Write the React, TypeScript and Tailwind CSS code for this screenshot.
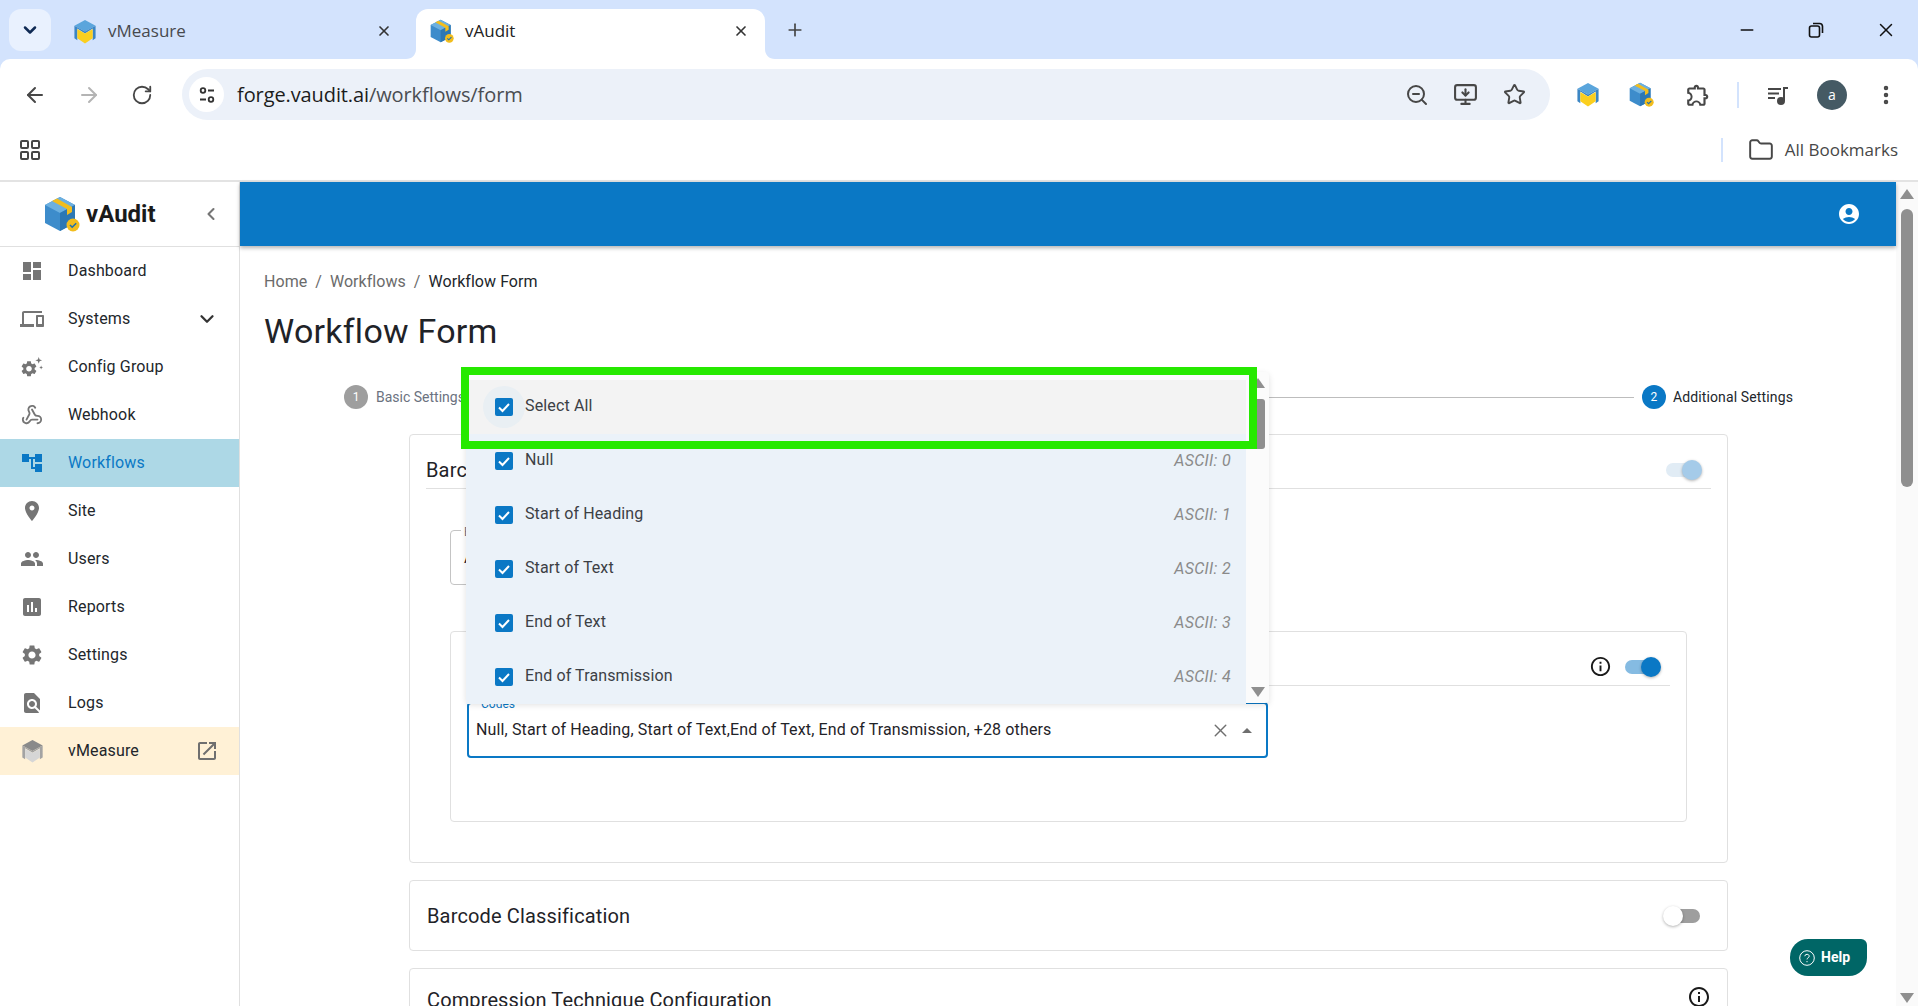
import {
  ArrowLeft,
  ArrowRight,
  ChevronDown,
  ChevronLeft,
  EllipsisVertical,
  Folder,
  LayoutGrid,
  Minus,
  MonitorDown,
  Plus,
  RotateCw,
  Star,
  Webhook,
  X,
  ZoomOut,
} from 'lucide-react';
import type { ReactNode } from 'react';

const roboto = "font-['Roboto',sans-serif]";

const PATHS = {
  dashboard: 'M3 13h8V3H3v10zm0 8h8v-6H3v6zm10 0h8V11h-8v10zm0-18v6h8V3h-8z',
  devices:
    'M4 6h18V4H4c-1.1 0-2 .9-2 2v11H0v3h14v-3H4V6zm19 2h-6c-.55 0-1 .45-1 1v10c0 .55.45 1 1 1h6c.55 0 1-.45 1-1V9c0-.55-.45-1-1-1zm-1 9h-4v-7h4v7z',
  settings:
    'M19.14 12.94c.04-.3.06-.61.06-.94 0-.32-.02-.64-.07-.94l2.03-1.58c.18-.14.23-.41.12-.61l-1.92-3.32c-.12-.22-.37-.29-.59-.22l-2.39.96c-.5-.38-1.03-.7-1.62-.94l-.36-2.54c-.04-.24-.24-.41-.48-.41h-3.84c-.24 0-.43.17-.47.41l-.36 2.54c-.59.24-1.13.57-1.62.94l-2.39-.96c-.22-.08-.47 0-.59.22L2.74 8.87c-.12.21-.08.47.12.61l2.03 1.58c-.05.3-.09.63-.09.94s.02.64.07.94l-2.03 1.58c-.18.14-.23.41-.12.61l1.92 3.32c.12.22.37.29.59.22l2.39-.96c.5.38 1.03.7 1.62.94l.36 2.54c.05.24.24.41.48.41h3.84c.24 0 .44-.17.47-.41l.36-2.54c.59-.24 1.13-.56 1.62-.94l2.39.96c.22.08.47 0 .59-.22l1.92-3.32c.12-.22.07-.47-.12-.61l-2.01-1.58zM12 15.6c-1.98 0-3.6-1.62-3.6-3.6s1.62-3.6 3.6-3.6 3.6 1.62 3.6 3.6-1.62 3.6-3.6 3.6z',
  place:
    'M12 2C8.13 2 5 5.13 5 9c0 5.25 7 13 7 13s7-7.75 7-13c0-3.87-3.13-7-7-7zm0 9.5c-1.38 0-2.5-1.12-2.5-2.5s1.12-2.5 2.5-2.5 2.5 1.12 2.5 2.5-1.12 2.5-2.5 2.5z',
  people:
    'M16 11c1.66 0 2.99-1.34 2.99-3S17.66 5 16 5c-1.66 0-3 1.34-3 3s1.34 3 3 3zm-8 0c1.66 0 2.99-1.34 2.99-3S9.66 5 8 5C6.34 5 5 6.34 5 8s1.34 3 3 3zm0 2c-2.33 0-7 1.17-7 3.5V19h14v-2.5c0-2.33-4.67-3.5-7-3.5zm8 0c-.29 0-.62.02-.97.05 1.16.84 1.97 1.97 1.97 3.45V19h6v-2.5c0-2.33-4.67-3.5-7-3.5z',
  assessment:
    'M19 3H5c-1.1 0-2 .9-2 2v14c0 1.1.9 2 2 2h14c1.1 0 2-.9 2-2V5c0-1.1-.9-2-2-2zM9 17H7v-7h2v7zm4 0h-2V7h2v10zm4 0h-2v-4h2v4z',
  findInPage:
    'M20 19.59V8l-6-6H6c-1.1 0-1.99.9-1.99 2L4 20c0 1.1.89 2 1.99 2H18c.45 0 .85-.15 1.19-.4l-4.43-4.43c-.8.52-1.74.83-2.76.83-2.76 0-5-2.24-5-5s2.24-5 5-5 5 2.24 5 5c0 1.02-.31 1.96-.83 2.75L20 19.59zM9 13c0 1.66 1.34 3 3 3s3-1.34 3-3-1.34-3-3-3-3 1.34-3 3z',
  openNew:
    'M19 19H5V5h7V3H5c-1.11 0-2 .9-2 2v14c0 1.1.89 2 2 2h14c1.1 0 2-.9 2-2v-7h-2v7zM14 3v2h3.59l-9.83 9.83 1.41 1.41L19 6.41V10h2V3h-7z',
  account:
    'M12 2C6.48 2 2 6.48 2 12s4.48 10 10 10 10-4.48 10-10S17.52 2 12 2zm0 4c1.93 0 3.5 1.57 3.5 3.5S13.93 13 12 13s-3.5-1.57-3.5-3.5S10.07 6 12 6zm0 14c-2.03 0-4.43-.82-6.14-2.88C7.55 15.8 9.68 15 12 15s4.45.8 6.14 2.12C16.43 19.18 14.03 20 12 20z',
  info: 'M11 7h2v2h-2zm0 4h2v6h-2zm1-9C6.48 2 2 6.48 2 12s4.48 10 10 10 10-4.48 10-10S17.52 2 12 2zm0 18c-4.41 0-8-3.59-8-8s3.59-8 8-8 8 3.59 8 8-3.59 8-8 8z',
  tree: 'M22 11V3h-7v3H9V3H2v8h7V8h2v10h4v3h7v-8h-7v3h-2V8h2v3z',
  extension:
    'M10.5 4.5c.28 0 .5.22.5.5v2h6v6h2c.28 0 .5.22.5.5s-.22.5-.5.5h-2v6h-2.12c-.68-1.75-2.39-3-4.38-3s-3.7 1.25-4.38 3H4v-2.12c1.75-.68 3-2.39 3-4.38 0-1.99-1.24-3.7-2.99-4.38L4 7h6V5c0-.28.22-.5.5-.5m0-2C9.12 2.5 8 3.62 8 5H4c-1.1 0-1.99.9-1.99 2v3.8h.49c1.49 0 2.7 1.21 2.7 2.7s-1.21 2.7-2.7 2.7H2V20c0 1.1.9 2 2 2h3.8v-.5c0-1.49 1.21-2.7 2.7-2.7s2.7 1.21 2.7 2.7v.5H17c1.1 0 2-.9 2-2v-4c1.38 0 2.5-1.12 2.5-2.5S20.38 11 19 11V7c0-1.1-.9-2-2-2h-4c0-1.38-1.12-2.5-2.5-2.5z',
};

function Mi({ d, className }: { d: string; className?: string }) {
  return (
    <svg viewBox="0 0 24 24" fill="currentColor" className={className}>
      <path d={d} />
    </svg>
  );
}

function VAuditLogo({ className }: { className?: string }) {
  return (
    <svg viewBox="0 0 36 36" className={className}>
      <path d="M16 1 31 9v18L16 35 1 27V9z" fill="#3d8ccb" />
      <path d="M16 1 31 9 16 17 1 9z" fill="#6cb0e0" />
      <path d="M16 17 31 9v18L16 35z" fill="#2c77b4" />
      <path d="M8 5 23 13v6l5-3v-5L13 2.5z" fill="#f2bd1d" />
      <circle cx="29" cy="29" r="6.5" fill="#f2bd1d" />
      <path d="m26 29 2.2 2.2 4-4" stroke="#1c6fb0" strokeWidth="1.6" fill="none" />
    </svg>
  );
}

function VMeasureLogo({ className, gray }: { className?: string; gray?: boolean }) {
  return (
    <svg viewBox="0 0 24 26" className={className}>
      <path d="M12 1 23 7 12 13 1 7z" fill={gray ? '#8a8a8a' : '#5aa5dc'} />
      <path d="M1 7v13l3 2V10l8 5 8-5v12l3-2V7l-11 6z" fill={gray ? '#a3a3a3' : '#3c86c4'} />
      <path d="M4 10.5 12 15l8-4.5V20l-8 5.5L4 20z" fill={gray ? '#d6d6d6' : '#fbcf1f'} />
    </svg>
  );
}

function ConfigIcon() {
  return (
    <svg viewBox="0 0 24 24" fill="currentColor" className="size-[23px]">
      <g transform="translate(-1.5 3.5) scale(.82)">
        <path d={PATHS.settings} />
      </g>
      <path d="m18.5 1 .9 2.6 2.6.9-2.6.9-.9 2.6-.9-2.6-2.6-.9 2.6-.9zM21 10l.6 1.4 1.4.6-1.4.6L21 14l-.6-1.4-1.4-.6 1.4-.6z" />
    </svg>
  );
}

function MediaIcon() {
  return (
    <svg viewBox="0 0 24 24" className="size-[24px]" fill="none" stroke="currentColor" strokeWidth="2">
      <path d="M2 6h13M2 10.5h11M2 15h7" />
      <circle cx="15" cy="18" r="3" fill="currentColor" />
      <path d="M18 18V5h4" />
    </svg>
  );
}

function Check({ halo }: { halo?: boolean }) {
  return (
    <span className="relative flex size-[18px] shrink-0 items-center justify-center rounded-[2px] bg-[#0a78c5]">
      {halo && <span className="absolute -inset-3 -z-10 rounded-full bg-[#e9eff3]" />}
      <svg viewBox="0 0 18 18" className="size-[18px]" fill="none" stroke="white" strokeWidth="2">
        <path d="m4 9.5 3.5 3.5L14 6" />
      </svg>
    </span>
  );
}

function Toggle({ on, track, thumb }: { on?: boolean; track: string; thumb: string }) {
  return (
    <span className={`relative block h-[14px] w-[34px] rounded-full ${track}`}>
      <span
        className={`absolute top-[-3px] size-[20px] rounded-full shadow-[0_1px_3px_rgba(0,0,0,0.3)] ${thumb} ${
          on ? 'right-[-2px]' : 'left-[-3px]'
        }`}
      />
    </span>
  );
}

function Tab({ title, active, icon }: { title: string; active?: boolean; icon: ReactNode }) {
  return (
    <div
      className={`relative flex h-[50px] w-[349px] items-center rounded-t-[12px] pb-[6px] pl-[14px] pr-[16px] ${
        active ? 'bg-white' : ''
      }`}
    >
      {active && (
        <>
          <svg viewBox="0 0 10 10" className="absolute bottom-0 left-[-10px] size-[10px]">
            <path d="M10 0v10H0c6 0 10-4 10-10z" fill="white" />
          </svg>
          <svg viewBox="0 0 10 10" className="absolute bottom-0 right-[-10px] size-[10px]">
            <path d="M0 0v10h10C4 10 0 6 0 0z" fill="white" />
          </svg>
        </>
      )}
      <span className="flex w-[24px] justify-center">{icon}</span>
      <span className={`ml-[11px] flex-1 text-[17px] ${active ? 'text-[#222]' : 'text-[#47494d]'}`}>{title}</span>
      <X className="size-[16px] text-[#333]" strokeWidth={2.5} />
    </div>
  );
}

function Browser() {
  return (
    <div className="font-['Open_Sans',sans-serif]">
      <div className="flex h-[59px] items-start bg-[#d3e3fd] pt-[9px]">
        <div className="ml-[9px] flex size-[42px] items-center justify-center rounded-[12px] bg-[#e9f1fe]">
          <ChevronDown className="size-[20px] text-[#0f2a54]" strokeWidth={3} />
        </div>
        <div className="ml-[8px] w-[357px]">
          <Tab title="vMeasure" icon={<VMeasureLogo className="h-[25px] w-[24px]" />} />
        </div>
        <Tab title="vAudit" active icon={<VAuditLogo className="size-[24px]" />} />
        <Plus className="ml-[20px] mt-[11px] size-[20px] text-[#444]" strokeWidth={2} />
        <div className="ml-auto mr-[21px] flex h-[42px] items-center gap-[49px] text-[#111]">
          <Minus className="size-[20px]" strokeWidth={1.6} />
          <svg viewBox="0 0 20 20" className="size-[20px]" fill="none" stroke="currentColor" strokeWidth="1.6">
            <rect x="3.5" y="6" width="10" height="11" rx="2" />
            <path d="M7 3.5h6.5a3 3 0 0 1 3 3V13" />
          </svg>
          <X className="size-[22px]" strokeWidth={1.6} />
        </div>
      </div>

      <div className="flex h-[61px] items-center rounded-t-[10px] bg-white pt-[10px] text-[#474747]">
        <ArrowLeft className="ml-[23px] size-[24px]" strokeWidth={2} />
        <ArrowRight className="ml-[30px] size-[24px] text-[#b4b4b4]" strokeWidth={2} />
        <RotateCw className="ml-[30px] size-[22px]" strokeWidth={2} />
        <div className="ml-[29px] flex h-[51px] w-[1368px] items-center rounded-full bg-[#ecf1f9] pl-[7px] pr-[24px]">
          <span className="flex size-[35px] items-center justify-center rounded-full bg-white">
            <svg viewBox="0 0 20 20" className="size-[20px]" fill="none" stroke="#333" strokeWidth="1.8">
              <circle cx="6" cy="5.5" r="2.3" />
              <path d="M11 5.5h6M3 14.5h6" />
              <circle cx="14" cy="14.5" r="2.3" />
            </svg>
          </span>
          <span className="ml-[13px] flex-1 text-[20px] tracking-[-0.1px] text-[#4a4d52]">
            <span className="text-[#1c1c1c]">forge.vaudit.ai</span>/workflows/form
          </span>
          <ZoomOut className="size-[24px]" strokeWidth={2} />
          <MonitorDown className="ml-[24px] size-[25px]" strokeWidth={2} />
          <Star className="ml-[25px] size-[23px]" strokeWidth={2} />
        </div>
        <VMeasureLogo className="ml-[26px] h-[25px] w-[24px]" />
        <VAuditLogo className="ml-[29px] size-[25px]" />
        <Mi d={PATHS.extension} className="ml-[31px] size-[26px]" />
        <span className="ml-[26px] h-[26px] w-[2px] bg-[#d3e3fd]" />
        <span className="ml-[27px]">
          <MediaIcon />
        </span>
        <span className="ml-[27px] flex size-[30px] items-center justify-center rounded-full bg-[#455a64] text-[14px] text-white">
          a
        </span>
        <EllipsisVertical className="ml-[27px] size-[24px]" strokeWidth={2.5} />
      </div>

      <div className="flex h-[62px] items-center border-b-2 border-[#e3e3e3] bg-white text-[#474747]">
        <LayoutGrid className="ml-[18px] size-[24px]" strokeWidth={2} />
        <span className="ml-auto h-[24px] w-[2px] bg-[#d3e3fd]" />
        <Folder className="ml-[25px] size-[26px]" strokeWidth={1.8} />
        <span className="ml-[11px] mr-[20px] text-[17px]">All Bookmarks</span>
      </div>
    </div>
  );
}

const NAV = [
  { label: 'Dashboard', icon: <Mi d={PATHS.dashboard} className="size-[24px]" /> },
  { label: 'Systems', icon: <Mi d={PATHS.devices} className="size-[24px]" />, trailing: 'chevron' },
  { label: 'Config Group', icon: <ConfigIcon /> },
  { label: 'Webhook', icon: <Webhook className="size-[22px]" strokeWidth={2} /> },
  { label: 'Workflows', icon: <Mi d={PATHS.tree} className="size-[24px]" />, active: true },
  { label: 'Site', icon: <Mi d={PATHS.place} className="size-[24px]" /> },
  { label: 'Users', icon: <Mi d={PATHS.people} className="size-[24px]" /> },
  { label: 'Reports', icon: <Mi d={PATHS.assessment} className="size-[24px]" /> },
  { label: 'Settings', icon: <Mi d={PATHS.settings} className="size-[24px]" /> },
  { label: 'Logs', icon: <Mi d={PATHS.findInPage} className="size-[24px]" /> },
  { label: 'vMeasure', icon: <VMeasureLogo gray className="h-[24px] w-[23px]" />, trailing: 'open', highlight: true },
];

function Sidebar() {
  return (
    <aside className="w-[240px] shrink-0 border-r border-[#e0e0e0] bg-white">
      <div className="flex h-[65px] items-center border-b border-[#e0e0e0] pl-[44px] pr-[18px]">
        <VAuditLogo className="size-[36px]" />
        <span className="ml-[6px] text-[24px] font-bold text-[#1a1a1a]">vAudit</span>
        <ChevronLeft className="ml-auto size-[20px] text-[#757575]" strokeWidth={2.5} />
      </div>
      <nav>
        {NAV.map((item) => (
          <div
            key={item.label}
            className={`flex h-[48px] items-center text-[16px] ${
              item.active ? 'bg-[#add8e6] text-[#0a78c5]' : 'text-[#22262b]'
            } ${item.highlight ? 'bg-[#fff1d6]' : ''}`}
          >
            <span className={`flex w-[64px] justify-center ${item.active ? 'text-[#0a78c5]' : 'text-[#757575]'}`}>
              {item.icon}
            </span>
            <span className="ml-[4px] flex-1 tracking-[0.15px]">{item.label}</span>
            {item.trailing === 'chevron' && <ChevronDown className="mr-[21px] size-[22px] text-[#333]" strokeWidth={2.5} />}
            {item.trailing === 'open' && <Mi d={PATHS.openNew} className="mr-[20px] size-[24px] text-[#6f6f6f]" />}
          </div>
        ))}
      </nav>
    </aside>
  );
}

function Stepper() {
  return (
    <div className="ml-[80px] mr-[103px] mt-[34px] flex h-[24px] items-center text-[14px]">
      <span className="flex size-[24px] items-center justify-center rounded-full bg-[#9e9e9e] text-[12px] text-white">1</span>
      <span className="ml-[8px] text-[#6b7280]">Basic Settings</span>
      <span className="mx-[8px] h-px flex-1 bg-[#bdbdbd]" />
      <span className="flex size-[24px] items-center justify-center rounded-full bg-[#0a78c5] text-[12px] text-white">2</span>
      <span className="ml-[7px] tracking-[0.13px] text-[#22262b]">Additional Settings</span>
    </div>
  );
}

function Cards() {
  return (
    <div className="ml-[145px] mt-[25px] flex w-[1319px] flex-col gap-[17px]">
      <section className="rounded-[4px] border border-[#e0e0e0] px-[16px]">
        <header className="flex h-[54px] items-center border-b border-[#e0e0e0] pt-[16px]">
          <h2 className="flex-1 text-[20px] tracking-[0.15px] text-[#1f2328]">Barcode Settings</h2>
          <span className="mr-[11px]">
            <Toggle on track="bg-[#e1ecf5]" thumb="bg-[#a5cbe9]" />
          </span>
        </header>
        <div className="relative mx-[24px] mt-[41px] flex h-[55px] w-[800px] items-center rounded-[4px] border border-[#c4c4c4] pl-[13px] text-[16px] text-[#1f2328]">
          <span className="absolute left-[10px] top-[-8px] bg-white px-[3px] text-[12px] text-[#6b7280]">Encoding</span>
          ASCII
        </div>
        <div className="mx-[24px] mb-[40px] mt-[46px] h-[191px] w-[1237px] rounded-[4px] border border-[#e0e0e0] pl-[16px] pr-[16px]">
          <header className="flex h-[54px] items-center justify-end border-b border-[#e0e0e0] pt-[16px]">
            <Mi d={PATHS.info} className="mr-[13px] size-[23px] text-[#1a1a1a]" />
            <span className="mr-[11px]">
              <Toggle on track="bg-[#85bbe2]" thumb="bg-[#0a78c5]" />
            </span>
          </header>
          <div className="relative mt-[16px] flex h-[56px] w-[801px] items-center rounded-[4px] border-2 border-[#0a78c5] pl-[7px] pr-[10px] text-[16px] text-[#1f2328]">
            <span className="absolute left-[8px] top-[-9px] bg-white px-[4px] text-[12px] text-[#0a78c5]">Codes</span>
            <span className="flex-1 whitespace-nowrap tracking-[0.13px]">
              Null, Start of Heading, Start of Text,End of Text, End of Transmission, +28 others
            </span>
            <X className="size-[21px] text-[#6f6f6f]" strokeWidth={1.6} />
            <span className="ml-[11px] mr-[4px] border-x-[5px] border-b-[5px] border-x-transparent border-b-[#6f6f6f]" />
          </div>
        </div>
      </section>

      <section className="flex h-[71px] items-center rounded-[4px] border border-[#e0e0e0] pl-[17px] pr-[16px]">
        <h2 className="flex-1 text-[20px] tracking-[0.15px] text-[#1f2328]">Barcode Classification</h2>
        <span className="mr-[11px]">
          <Toggle track="bg-[#9e9e9e]" thumb="bg-white" />
        </span>
      </section>

      <section className="flex h-[71px] items-start rounded-[4px] border border-[#e0e0e0] pl-[17px] pr-[16px] pt-[16px]">
        <h2 className="flex-1 text-[20px] tracking-[0.12px] text-[#1f2328]">Compression Technique Configuration</h2>
        <Mi d={PATHS.info} className="size-[24px] text-[#1a1a1a]" />
      </section>
    </div>
  );
}

const CODES = [
  { label: 'Null', ascii: 0 },
  { label: 'Start of Heading', ascii: 1 },
  { label: 'Start of Text', ascii: 2 },
  { label: 'End of Text', ascii: 3 },
  { label: 'End of Transmission', ascii: 4 },
];

function CodesMenu() {
  return (
    <div className={`absolute left-[466px] top-[372px] flex h-[331px] w-[803px] rounded-[4px] bg-[#fbfbfb] shadow-[0_2px_6px_rgba(0,0,0,0.12)] ${roboto}`}>
      <div className="mt-[8px] w-[780px]">
        <div className="isolate flex h-[54px] items-center bg-[#f3f3f3] pl-[29px] text-[16px] tracking-[0.15px] text-[#3c4045]">
          <Check halo />
          <span className="mb-[2px] ml-[12px]">Select All</span>
        </div>
        {CODES.map((code) => (
          <div key={code.label} className="flex h-[54px] items-center bg-[#ebf2f9] pl-[29px] pr-[15px] text-[16px] tracking-[0.12px] text-[#3c4045]">
            <Check />
            <span className="mb-[2px] ml-[12px] flex-1">{code.label}</span>
            <span className="text-[16px] italic tracking-[0.3px] text-[#8a8a8a]">ASCII: {code.ascii}</span>
          </div>
        ))}
      </div>
      <div className="flex w-[23px] flex-col items-center">
        <span className="mt-[6px] border-x-[7px] border-b-[10px] border-x-transparent border-b-[#8f8f8f]" />
        <span className="mt-[11px] h-[50px] w-[14px] rounded-[3px] bg-[#8f8f8f]" />
        <span className="mb-[6px] mt-auto border-x-[7px] border-t-[10px] border-x-transparent border-t-[#8f8f8f]" />
      </div>
    </div>
  );
}

function Scrollbar() {
  return (
    <div className="flex w-[22px] shrink-0 flex-col items-center bg-[#fafafa] pt-[7px]">
      <span className="border-x-[7px] border-b-[10px] border-x-transparent border-b-[#8f8f8f]" />
      <span className="mt-[10px] h-[278px] w-[12px] rounded-full bg-[#8f8f8f]" />
      <span className="mb-[3px] mt-auto border-x-[7px] border-t-[10px] border-x-transparent border-t-[#8f8f8f]" />
    </div>
  );
}

export default function App() {
  return (
    <div className="relative flex h-screen w-full flex-col overflow-hidden bg-[#d3e3fd]">
      <Browser />
      <div className={`flex min-h-0 flex-1 bg-white ${roboto}`}>
        <Sidebar />
        <main className="flex min-w-0 flex-1 flex-col">
          <div className="z-10 flex h-[64px] shrink-0 items-center justify-end bg-[#0a78c5] pr-[35px] shadow-[0_2px_4px_rgba(0,0,0,0.3)]">
            <Mi d={PATHS.account} className="size-[24px] text-white" />
          </div>
          <div className="min-h-0 flex-1 pl-[24px] pt-[24px]">
            <div className="flex h-[24px] items-center text-[16px] tracking-[0.05px] text-[#6b6b6b]">
              <span>Home</span>
              <span className="mx-[8px]">/</span>
              <span>Workflows</span>
              <span className="mx-[8px]">/</span>
              <span className="text-[#22262b]">Workflow Form</span>
            </div>
            <h1 className="mt-[17px] text-[34px] leading-[40px] tracking-[0.25px] text-[#1f2328]">Workflow Form</h1>
            <Stepper />
            <Cards />
          </div>
        </main>
        <Scrollbar />
      </div>

      <CodesMenu />

      {/* annotation drawn on top of the screenshot */}
      <div className="absolute left-[461px] top-[367px] h-[82px] w-[796px] border-[8px] border-[#26e900]" />

      <div className={`absolute left-[1790px] top-[939px] flex h-[37px] w-[77px] items-center rounded-bl-[18px] rounded-br-[18px] rounded-tl-[18px] rounded-tr-[6px] bg-[#006666] pl-[9px] text-[14px] font-bold text-white ${roboto}`}>
        <svg viewBox="0 0 16 16" className="size-[16px]" fill="none" stroke="white" strokeWidth="1">
          <circle cx="8" cy="8" r="7.3" />
          <path d="M5.8 6.2A2.2 2.2 0 0 1 8 4.3c1.3 0 2.2.8 2.2 1.9 0 1.6-2.2 1.6-2.2 3.2M8 11v1.2" />
        </svg>
        <span className="ml-[6px]">Help</span>
      </div>
    </div>
  );
}
